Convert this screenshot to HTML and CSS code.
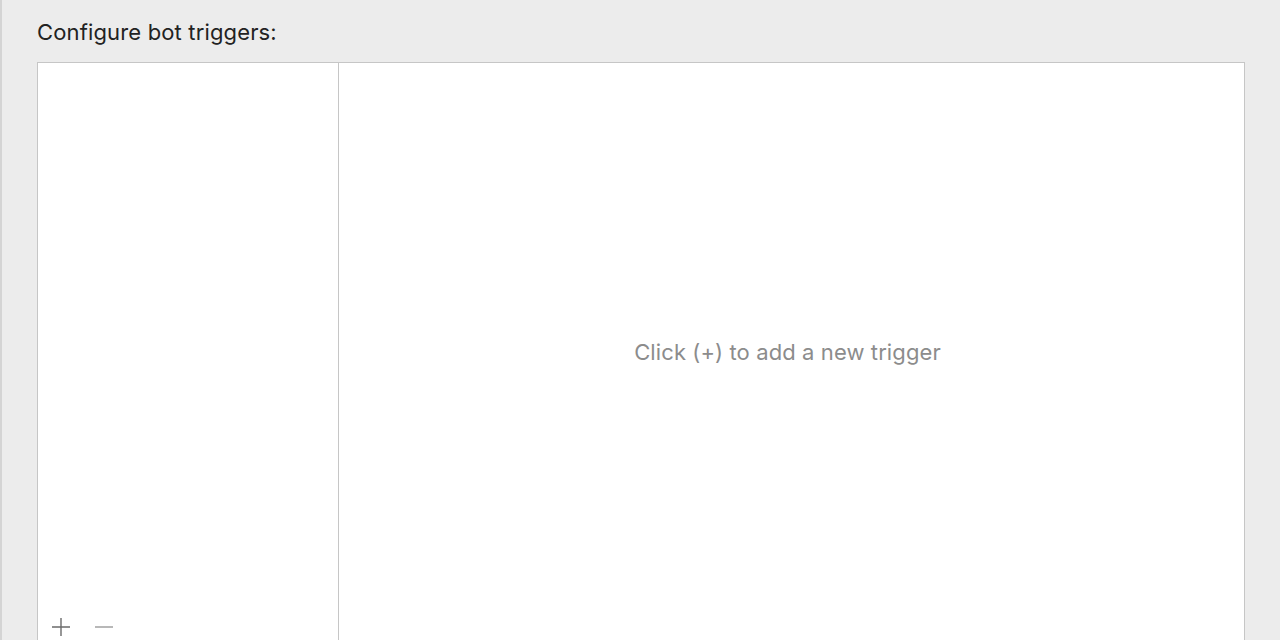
FILE: index.html
```html
<!DOCTYPE html>
<html lang="en">
<head>
    <meta charset="UTF-8">
    <title>Bot triggers</title>
    <link rel="stylesheet" href="styles.css">
</head>
<body>
    <div class="window">
        <div class="title">Configure bot triggers:</div>
        <div class="editor">
            <div class="trigger-list">
                <div class="list-items"></div>
                <div class="list-tools">
                    <button class="tool" title="Add">
                        <svg width="20" height="20" viewBox="0 0 20 20"><path d="M10 1v18M1 10h18" stroke="#6b6b6b" stroke-width="1.4" fill="none"/></svg>
                    </button>
                    <button class="tool" title="Remove">
                        <svg width="20" height="20" viewBox="0 0 20 20"><path d="M1 10h18" stroke="#9a9a9a" stroke-width="1.4" fill="none"/></svg>
                    </button>
                </div>
            </div>
            <div class="trigger-detail">
                <span class="placeholder">Click (+) to add a new trigger</span>
            </div>
        </div>
    </div>
</body>
</html>
```

FILE: styles.css
```css
body {
    margin: 0;
    background-color: #ececec;
    font-family: Inter, "Liberation Sans", Arial, sans-serif;
    overflow: hidden;
}

.window {
    height: 640px;
    border-left: 2px solid #d4d4d4;
    padding: 19px 35px 0 35px;
    box-sizing: border-box;
}

.title {
    font-size: 22px;
    color: #222;
    line-height: 26px;
    margin-bottom: 17px;
    letter-spacing: 0.15px;
}

.editor {
    display: flex;
    width: 1206px;
    height: 578px;
    background-color: #fff;
    border: 1px solid #c6c6c6;
    border-bottom: none;
}

.trigger-list {
    width: 300px;
    border-right: 1px solid #c6c6c6;
    display: flex;
    flex-direction: column;
}

.list-items {
    flex: 1;
}

.list-tools {
    display: flex;
    gap: 23px;
    padding: 0 0 4px 13px;
}

.tool {
    border: none;
    background: none;
    padding: 0;
    width: 20px;
    height: 20px;
    cursor: pointer;
}

.trigger-detail {
    flex: 1;
    display: flex;
    align-items: center;
    justify-content: center;
    padding-right: 8px;
}

.placeholder {
    font-size: 22px;
    color: #8c8c8c;
    letter-spacing: 0.1px;
}
```
